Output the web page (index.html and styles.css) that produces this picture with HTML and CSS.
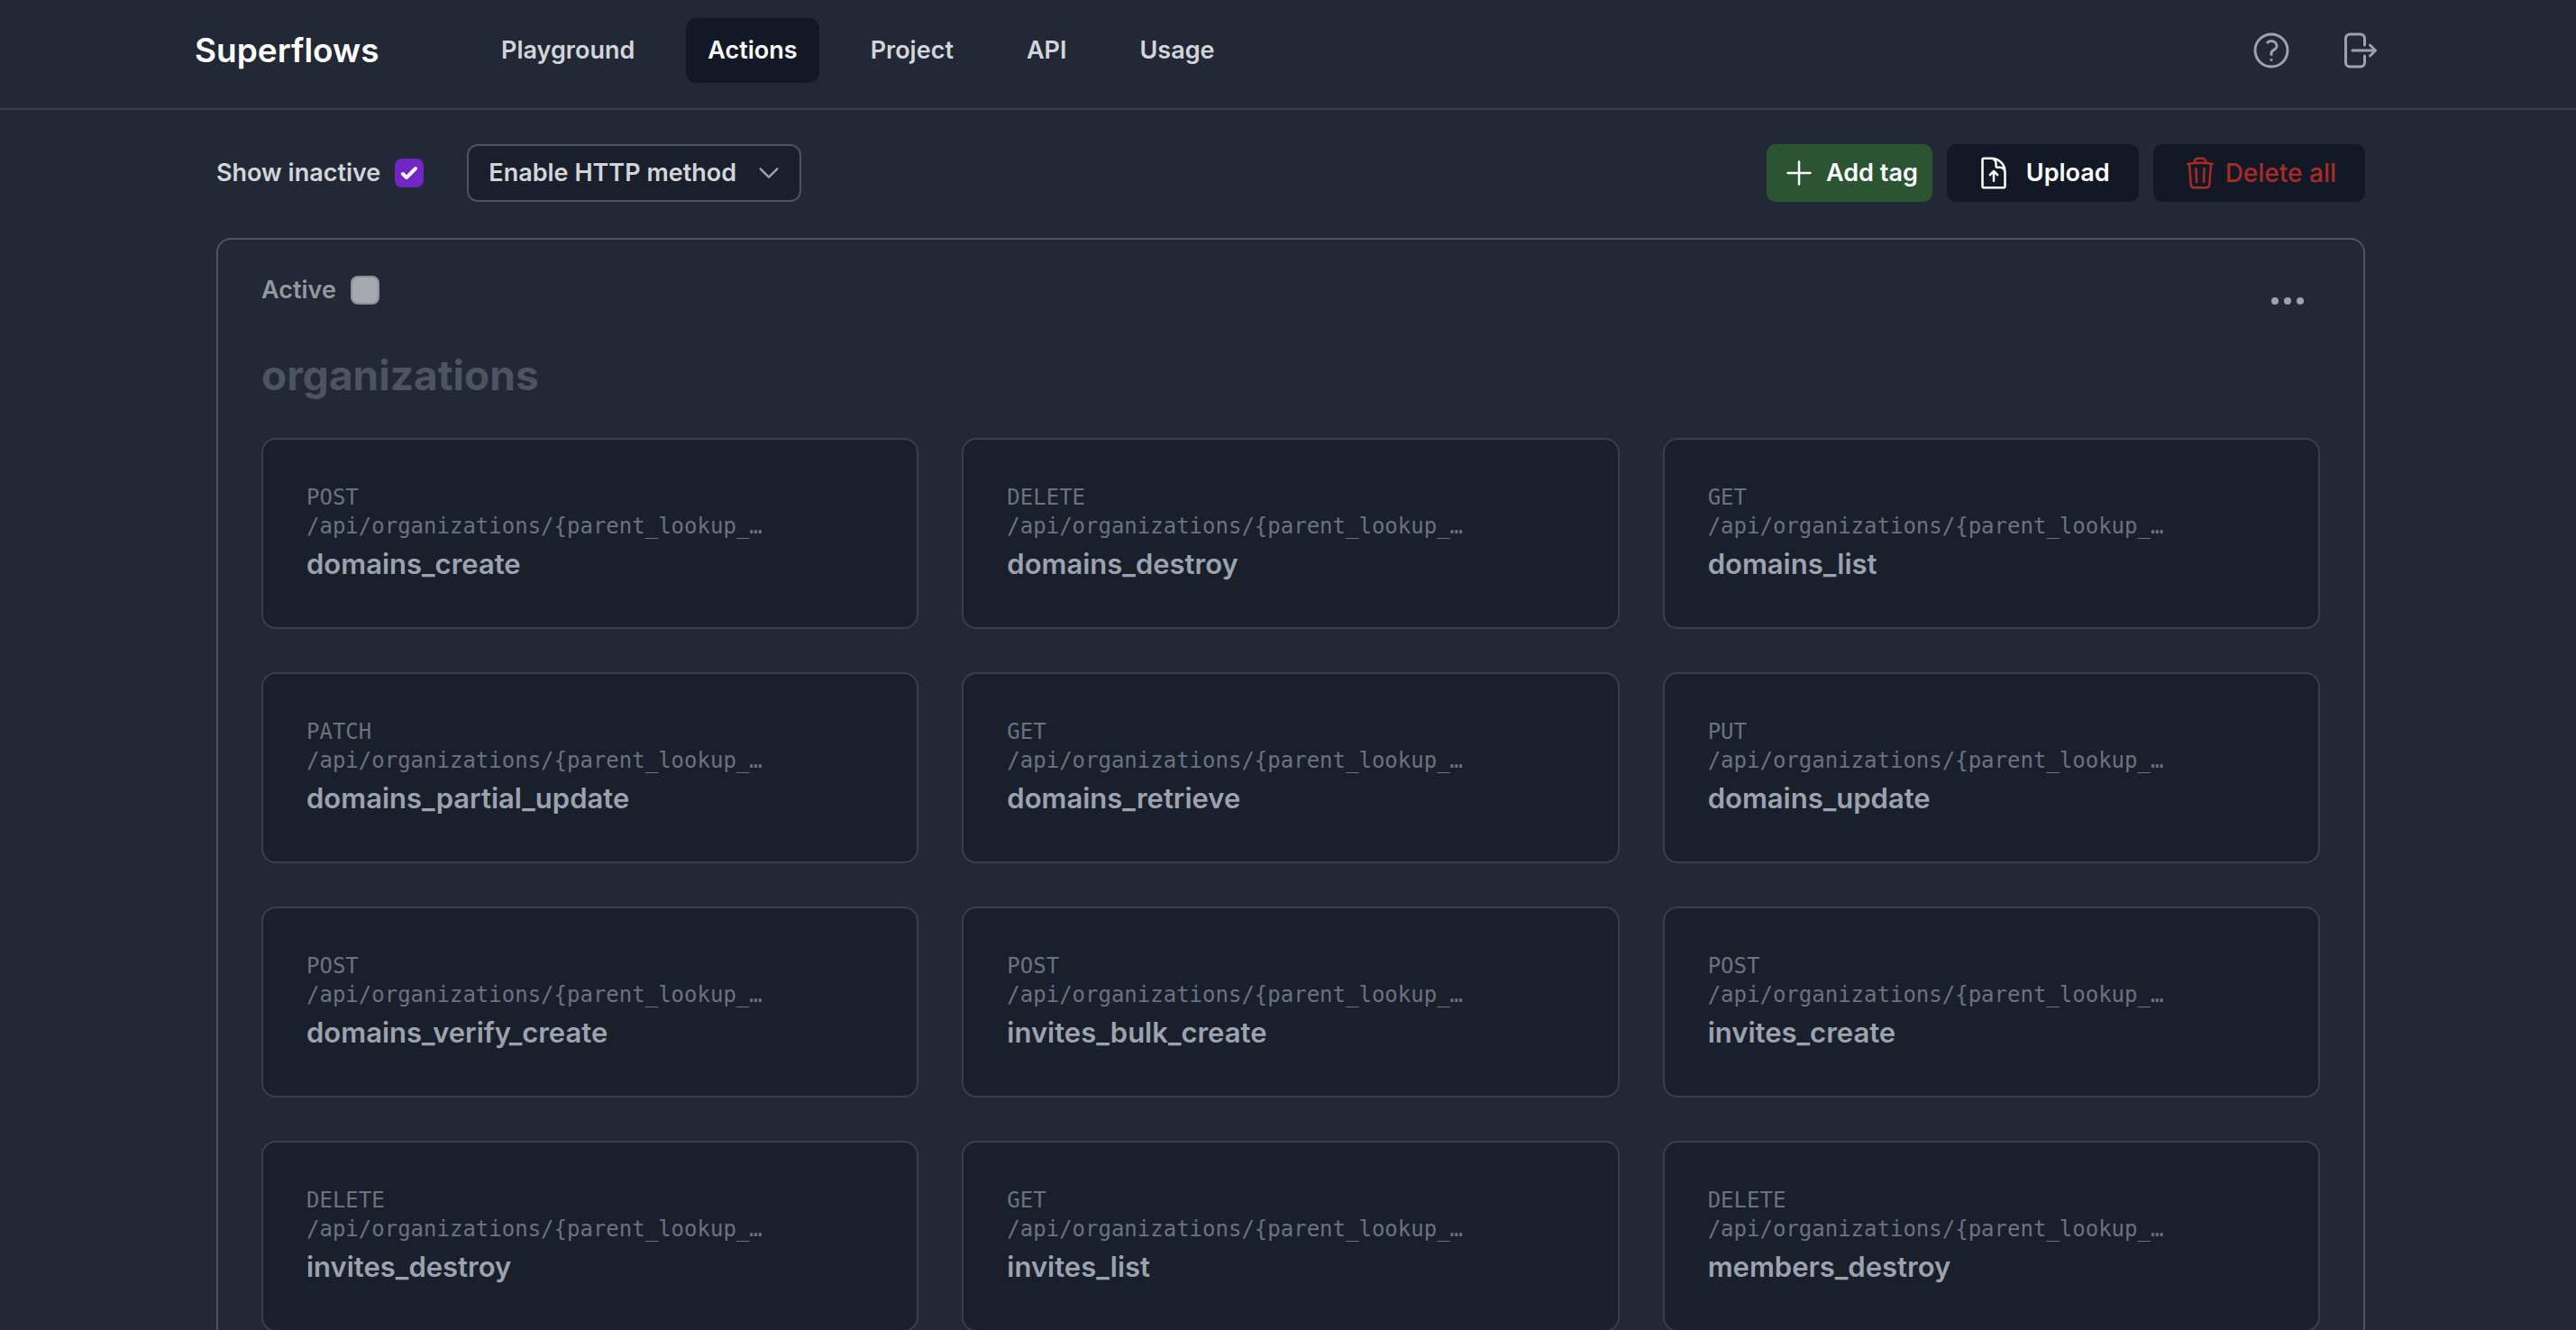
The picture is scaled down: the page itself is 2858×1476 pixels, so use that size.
FILE: index.html
```html
<!DOCTYPE html>
<html lang="en">
<head>
  <meta charset="utf-8">
  <meta name="viewport" content="width=device-width, initial-scale=1">
  <title>Superflows – Actions</title>
  <link rel="stylesheet" href="styles.css">
</head>
<body>
  <header class="navbar">
    <a class="brand" href="#">Superflows</a>
    <nav class="nav-links">
      <a class="nav-link" href="#">Playground</a>
      <a class="nav-link nav-link--active" href="#" aria-current="page">Actions</a>
      <a class="nav-link" href="#">Project</a>
      <a class="nav-link" href="#">API</a>
      <a class="nav-link" href="#">Usage</a>
    </nav>
    <div class="nav-icons">
      <button class="icon-button" type="button" aria-label="Help">
        <svg class="icon-lg" viewBox="0 0 24 24"><path d="M9.879 7.519c1.171-1.025 3.071-1.025 4.242 0 1.172 1.025 1.172 2.687 0 3.712-.203.179-.43.326-.67.442-.745.361-1.45.999-1.45 1.827v.75M21 12a9 9 0 11-18 0 9 9 0 0118 0zm-9 5.25h.008v.008H12v-.008z"/></svg>
      </button>
      <button class="icon-button" type="button" aria-label="Sign out">
        <svg class="icon-lg" viewBox="0 0 24 24"><path d="M15.75 9V5.25A2.25 2.25 0 0013.5 3h-6a2.25 2.25 0 00-2.25 2.25v13.5A2.25 2.25 0 007.5 21h6a2.25 2.25 0 002.25-2.25V15m3 0l3-3m0 0l-3-3m3 3H9"/></svg>
      </button>
    </div>
  </header>

  <main class="page">
    <div class="toolbar">
      <label class="check-label" for="show-inactive">Show inactive
        <input class="checkbox" id="show-inactive" type="checkbox" checked>
      </label>
      <div class="select-wrap">
        <select class="select" aria-label="Enable HTTP method">
          <option>Enable HTTP method</option>
        </select>
        <svg class="select-chevron" viewBox="0 0 24 24"><path d="M4 8l8 8 8-8"/></svg>
      </div>
      <div class="toolbar-actions">
        <button class="button button--add" type="button">
          <svg class="icon-md" viewBox="0 0 24 24"><path d="M12 4.5v15m7.5-7.5h-15"/></svg>
          Add tag
        </button>
        <button class="button button--upload" type="button">
          <svg class="icon-md" viewBox="0 0 24 24"><path d="M19.5 14.25v-2.625a3.375 3.375 0 00-3.375-3.375h-1.5A1.125 1.125 0 0113.5 7.125v-1.5a3.375 3.375 0 00-3.375-3.375H8.25m3.75 15v-6.5m-2.5 2.5l2.5-2.5 2.5 2.5M10.5 2.25H5.625c-.621 0-1.125.504-1.125 1.125v17.25c0 .621.504 1.125 1.125 1.125h12.75c.621 0 1.125-.504 1.125-1.125V11.25a9 9 0 00-9-9z"/></svg>
          Upload
        </button>
        <button class="button button--delete" type="button">
          <svg class="icon-md" viewBox="0 0 24 24"><path d="M14.74 9l-.346 9m-4.788 0L9.26 9m9.968-3.21c.342.052.682.107 1.022.166m-1.022-.165L18.16 19.673a2.25 2.25 0 01-2.244 2.077H8.084a2.25 2.25 0 01-2.244-2.077L4.772 5.79m14.456 0a48.108 48.108 0 00-3.478-.397m-12 .562c.34-.059.68-.114 1.022-.165m0 0a48.11 48.11 0 013.478-.397m7.5 0v-.916c0-1.18-.91-2.164-2.09-2.201a51.964 51.964 0 00-3.32 0c-1.18.037-2.09 1.022-2.09 2.201v.916m7.5 0a48.667 48.667 0 00-7.5 0"/></svg>
          Delete all
        </button>
      </div>
    </div>

    <section class="tag-panel">
      <div class="tag-top">
        <label class="check-label check-label--muted" for="tag-active">Active
          <input class="checkbox checkbox--muted" id="tag-active" type="checkbox">
        </label>
        <button class="icon-button" type="button" aria-label="More options">
          <svg class="icon-lg icon-solid" viewBox="0 0 24 24"><circle cx="5" cy="12" r="2"/><circle cx="12" cy="12" r="2"/><circle cx="19" cy="12" r="2"/></svg>
        </button>
      </div>
      <h1 class="tag-name">organizations</h1>
      <div class="action-grid">
        <article class="action"><p class="action-route">POST</p><p class="action-route">/api/organizations/{parent_lookup_…</p><h2 class="action-name">domains_create</h2></article>
        <article class="action"><p class="action-route">DELETE</p><p class="action-route">/api/organizations/{parent_lookup_…</p><h2 class="action-name">domains_destroy</h2></article>
        <article class="action"><p class="action-route">GET</p><p class="action-route">/api/organizations/{parent_lookup_…</p><h2 class="action-name">domains_list</h2></article>
        <article class="action"><p class="action-route">PATCH</p><p class="action-route">/api/organizations/{parent_lookup_…</p><h2 class="action-name">domains_partial_update</h2></article>
        <article class="action"><p class="action-route">GET</p><p class="action-route">/api/organizations/{parent_lookup_…</p><h2 class="action-name">domains_retrieve</h2></article>
        <article class="action"><p class="action-route">PUT</p><p class="action-route">/api/organizations/{parent_lookup_…</p><h2 class="action-name">domains_update</h2></article>
        <article class="action"><p class="action-route">POST</p><p class="action-route">/api/organizations/{parent_lookup_…</p><h2 class="action-name">domains_verify_create</h2></article>
        <article class="action"><p class="action-route">POST</p><p class="action-route">/api/organizations/{parent_lookup_…</p><h2 class="action-name">invites_bulk_create</h2></article>
        <article class="action"><p class="action-route">POST</p><p class="action-route">/api/organizations/{parent_lookup_…</p><h2 class="action-name">invites_create</h2></article>
        <article class="action"><p class="action-route">DELETE</p><p class="action-route">/api/organizations/{parent_lookup_…</p><h2 class="action-name">invites_destroy</h2></article>
        <article class="action"><p class="action-route">GET</p><p class="action-route">/api/organizations/{parent_lookup_…</p><h2 class="action-name">invites_list</h2></article>
        <article class="action"><p class="action-route">DELETE</p><p class="action-route">/api/organizations/{parent_lookup_…</p><h2 class="action-name">members_destroy</h2></article>
      </div>
    </section>
  </main>
</body>
</html>
```
FILE: styles.css
```css
:root {
  --bg: #222835;
  --surface: #1a1f2c;
  --dark: #121826;
  --line: #393f4d;
  --line-strong: #4c5361;
  --text: #d2d5da;
  --muted: #9ca3af;
  --faint: #6b7280;
}

*, *::before, *::after { box-sizing: border-box; }

body {
  margin: 0;
  height: 100vh;
  display: flex;
  flex-direction: column;
  overflow: hidden;
  background: var(--bg);
  color: var(--text);
  font-family: Inter, "Liberation Sans", sans-serif;
  font-size: 27px;
  font-weight: 600;
  line-height: 40px;
}

h1, h2, p { margin: 0; }
a { color: inherit; text-decoration: none; }
button, select, input { font: inherit; color: inherit; margin: 0; }
button { border: 0; cursor: pointer; }

svg {
  display: block;
  flex: none;
  fill: none;
  stroke: currentColor;
  stroke-width: 1.5;
  stroke-linecap: round;
  stroke-linejoin: round;
}
.icon-md { width: 40px; height: 40px; }
.icon-lg { width: 48px; height: 48px; }
.icon-solid { fill: currentColor; stroke: none; }

.icon-button {
  padding: 0;
  background: none;
  color: var(--muted);
}

/* Top navigation */
.navbar {
  flex: none;
  display: flex;
  align-items: center;
  padding: 20px 218px 28px 216px;
  border-bottom: 2px solid var(--line);
}
.brand {
  flex: none;
  width: 316px;
  color: #fff;
  font-size: 37px;
}
.nav-links { display: flex; gap: 33px; }
.nav-link { padding: 16px 24px; border-radius: 12px; }
.nav-link--active { background: var(--dark); color: #fff; }
.nav-icons { display: flex; gap: 48px; margin-left: auto; }

/* Page body */
.page {
  flex: 1;
  min-height: 0;
  overflow-y: auto;
  scrollbar-width: none;
  padding: 38px 234px 48px 240px;
}
.toolbar { display: flex; align-items: center; gap: 48px; }
.check-label { display: flex; align-items: center; gap: 16px; }
.check-label--muted { color: #94989f; }

.checkbox {
  appearance: none;
  width: 32px;
  height: 32px;
  border-radius: 8px;
  background: #a6a8b0;
}
.checkbox:checked {
  background: #7326c6 url("data:image/svg+xml,%3Csvg viewBox='0 0 16 16' fill='white' xmlns='http://www.w3.org/2000/svg'%3E%3Cpath d='M12.207 4.793a1 1 0 010 1.414l-5 5a1 1 0 01-1.414 0l-2-2a1 1 0 011.414-1.414L6.5 9.086l4.293-4.293a1 1 0 011.414 0z'/%3E%3C/svg%3E") center / 100% no-repeat;
}
.checkbox--muted { border: 2px solid #8b8f98; }

.select-wrap { position: relative; }
.select {
  appearance: none;
  display: block;
  height: 64px;
  padding: 0 70px 0 22px;
  border: 2px solid var(--line-strong);
  border-radius: 12px;
  background: var(--surface);
}
.select-chevron {
  position: absolute;
  top: 18px;
  right: 22px;
  width: 28px;
  height: 28px;
  color: var(--muted);
  stroke-width: 2;
  pointer-events: none;
}

.toolbar-actions { display: flex; gap: 16px; margin-left: auto; }
.button {
  display: flex;
  align-items: center;
  height: 64px;
  border-radius: 10px;
  background: var(--dark);
  color: #fff;
}
.button--add { padding: 0 16px; gap: 10px; background: #2a5432; }
.button--upload { padding: 0 32px; gap: 16px; }
.button--delete {
  padding: 0 32px;
  gap: 8px;
  color: #a82b24;
  font-size: 28px;
  font-weight: 500;
}

/* Tag panel */
.tag-panel {
  margin-top: 40px;
  padding: 36px 48px 48px;
  border: 2px solid var(--line-strong);
  border-radius: 16px;
}
.tag-top {
  display: flex;
  align-items: flex-start;
  justify-content: space-between;
  height: 60px;
}
.tag-top .icon-button { margin: 8px 12px 0 0; }
.tag-name {
  margin: 24px 0 40px;
  color: #4c5361;
  font-size: 46px;
  font-weight: 700;
  line-height: 60px;
}

.action-grid {
  display: grid;
  grid-template-columns: repeat(3, minmax(0, 1fr));
  gap: 48px;
}
.action {
  min-height: 212px;
  padding: 48px;
  border: 2px solid var(--line);
  border-radius: 16px;
  background: var(--surface);
}
.action-route {
  overflow: hidden;
  color: var(--faint);
  font-family: "DejaVu Sans Mono", monospace;
  font-size: 24px;
  font-weight: 400;
  line-height: 32px;
  white-space: nowrap;
}
.action-name {
  margin-top: 4px;
  color: var(--muted);
  font-size: 31px;
  font-weight: 600;
  line-height: 44px;
}
```
